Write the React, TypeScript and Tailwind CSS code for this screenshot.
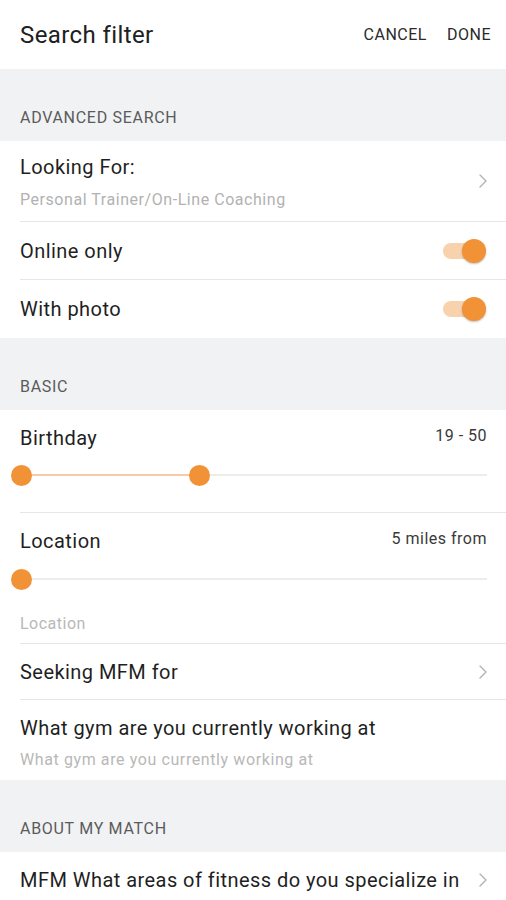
import { ChevronRight } from 'lucide-react';

const orange = 'bg-[#f19236]';

function SectionHeader({ title }: { title: string }) {
    return (
        <div className="h-[72px] bg-[#f1f2f4] flex items-end px-5 pb-[13px]">
            <span className="text-[16px] leading-[20px] text-[#5b5b5b] tracking-[0.7px]">{title}</span>
        </div>
    );
}

function Chevron() {
    return <ChevronRight className="w-6 h-6 text-[#b3b3b3] shrink-0" strokeWidth={1.4} />;
}

function Toggle() {
    return (
        <div className="relative w-[44px] h-[24px] flex items-center shrink-0">
            <div className="w-[38px] h-[16px] rounded-full bg-[#f7d2ad] ml-[1px]" />
            <div className={`absolute right-0 top-0 w-[24px] h-[24px] rounded-full ${orange} shadow-[0_1px_2px_rgba(0,0,0,0.25)]`} />
        </div>
    );
}

function Divider() {
    return <div className="ml-5 h-px bg-[#e6e6e6]" />;
}

export default function App() {
    return (
        <div className="w-[506px] h-[900px] overflow-hidden bg-white font-['Roboto',sans-serif] text-[#1f1f1f] tracking-[0.45px]">
            {/* Top bar */}
            <div className="h-[69px] flex items-center justify-between pl-5 pr-[15px]">
                <h1 className="text-[24px] tracking-[0.4px] text-[#202020]">Search filter</h1>
                <div className="flex items-center gap-[20px] text-[16px] tracking-[0.5px] text-[#2a2a2a]">
                    <span>CANCEL</span>
                    <span>DONE</span>
                </div>
            </div>

            <SectionHeader title="ADVANCED SEARCH" />

            <div className="bg-white">
                <div className="flex items-center pl-5 pr-[11px] h-[80px]">
                    <div className="flex-1 pt-[2px]">
                        <div className="text-[20px] leading-[24px]">Looking For:</div>
                        <div className="text-[16px] tracking-[0.55px] leading-[20px] mt-[11px] text-[#b2b2b2]">Personal Trainer/On-Line Coaching</div>
                    </div>
                    <Chevron />
                </div>
                <Divider />
                <div className="flex items-center justify-between pl-5 pr-[20px] h-[57px]">
                    <span className="text-[20px]">Online only</span>
                    <Toggle />
                </div>
                <Divider />
                <div className="flex items-center justify-between pl-5 pr-[20px] h-[58px]">
                    <span className="text-[20px]">With photo</span>
                    <Toggle />
                </div>
            </div>

            <SectionHeader title="BASIC" />

            <div className="bg-white">
                <div className="pl-5 pr-[19px] pt-[16px] h-[102px]">
                    <div className="flex items-center justify-between">
                        <span className="text-[20px] leading-[24px]">Birthday</span>
                        <span className="text-[16px] tracking-[0.5px] text-[#3a3a3a] -mt-[4px]">19 - 50</span>
                    </div>
                    <div className="relative h-[22px] mt-[14px] flex items-center">
                        <div className="w-full h-[2px] bg-[#ececec]" />
                        <div className="absolute left-0 w-[179px] h-[2px] bg-[#f8c9a8]" />
                        <div className={`absolute left-[-9px] w-[21px] h-[21px] rounded-full ${orange}`} />
                        <div className={`absolute left-[169px] w-[21px] h-[21px] rounded-full ${orange}`} />
                    </div>
                </div>
                <Divider />
                <div className="pl-5 pr-[19px] pt-[16px]">
                    <div className="flex items-center justify-between">
                        <span className="text-[20px] leading-[24px]">Location</span>
                        <span className="text-[16px] tracking-[0.5px] text-[#3a3a3a] -mt-[4px]">5 miles from</span>
                    </div>
                    <div className="relative h-[22px] mt-[15px] flex items-center">
                        <div className="w-full h-[2px] bg-[#ececec]" />
                        <div className={`absolute left-[-9px] w-[21px] h-[21px] rounded-full ${orange}`} />
                    </div>
                    <div className="text-[16px] tracking-[0.5px] leading-[20px] text-[#b8b8b8] pt-[24px] pb-[9px]">Location</div>
                </div>
                <Divider />
                <div className="flex items-center justify-between pl-5 pr-[11px] h-[55px]">
                    <span className="text-[20px]">Seeking MFM for</span>
                    <Chevron />
                </div>
                <Divider />
                <div className="pl-5 pt-[16px] h-[80px]">
                    <div className="text-[20px] leading-[24px]">What gym are you currently working at</div>
                    <div className="text-[16px] tracking-[0.6px] leading-[20px] mt-[10px] text-[#b8b8b8]">What gym are you currently working at</div>
                </div>
            </div>

            <SectionHeader title="ABOUT MY MATCH" />

            <div className="bg-white flex items-center justify-between pl-5 pr-[11px] h-[56px]">
                <span className="text-[20px]">MFM What areas of fitness do you specialize in</span>
                <Chevron />
            </div>
        </div>
    );
}
